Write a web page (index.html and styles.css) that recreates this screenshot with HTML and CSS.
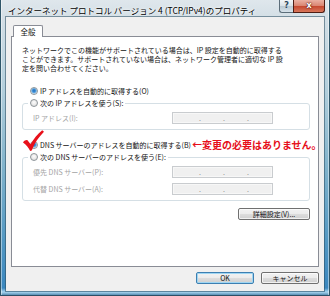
FILE: index.html
```html
<!DOCTYPE html>
<html lang="ja">
<head>
<meta charset="utf-8">
<title>IPv4 のプロパティ</title>
<link rel="stylesheet" href="styles.css">
</head>
<body>
<div class="window">
  <div class="titlebar">
    <span class="title">インターネット プロトコル バージョン 4 (TCP/IPv4)のプロパティ</span>
    <div class="caption">
      <span class="cap help">?</span>
      <span class="cap close">x</span>
    </div>
  </div>
  <div class="client">
    <div class="tabs"><div class="tab">全般</div></div>
    <div class="panel">
      <p class="desc">ネットワークでこの機能がサポートされている場合は、IP 設定を自動的に取得する<br>ことができます。サポートされていない場合は、ネットワーク管理者に適切な IP 設<br>定を問い合わせてください。</p>

      <div class="row opt"><span class="radio on"></span><span>IP アドレスを自動的に取得する(O)</span></div>
      <fieldset class="group">
        <legend class="opt"><span class="radio"></span><span>次の IP アドレスを使う(S):</span></legend>
        <div class="field"><span class="lbl">IP アドレス(I):</span><span class="ip"><i>.</i><i>.</i><i>.</i></span></div>
      </fieldset>

      <div class="row opt dns">
        <span class="radio on"></span><span>DNS サーバーのアドレスを自動的に取得する(B)</span><span class="note">←変更の必要はありません。</span>
        <svg class="check" width="22" height="22" viewBox="0 0 22 22"><path d="M0 12.5 C1.5 10.5 3 9.8 4.5 10.2 L7.6 14.2 C10.8 8.6 14.6 3.8 19.2 0.2 L21 1.8 C15.6 7.2 11.6 13 8.8 20.4 L7.2 21 C5.4 17.4 3.2 14.6 0 12.5 Z" fill="#e8101a"/></svg>
      </div>
      <fieldset class="group">
        <legend class="opt"><span class="radio"></span><span>次の DNS サーバーのアドレスを使う(E):</span></legend>
        <div class="field"><span class="lbl">優先 DNS サーバー(P):</span><span class="ip"><i>.</i><i>.</i><i>.</i></span></div>
        <div class="field"><span class="lbl">代替 DNS サーバー(A):</span><span class="ip"><i>.</i><i>.</i><i>.</i></span></div>
      </fieldset>

      <div class="adv"><button class="btn wide">詳細設定(V)...</button></div>
    </div>
    <div class="actions">
      <button class="btn default">OK</button>
      <button class="btn">キャンセル</button>
    </div>
  </div>
</div>
</body>
</html>
```

FILE: styles.css
```css
* { box-sizing: border-box; }
html, body { margin: 0; padding: 0; }
body {
  width: 330px;
  height: 296px;
  overflow: hidden;
  font-family: "Noto Sans CJK JP", "Noto Sans", sans-serif;
  font-size: 7px;
  color: #111;
}

.window {
  width: 330px;
  height: 296px;
  padding: 0 6px 5px 6px;
  background: linear-gradient(180deg, #dfe7ec 0, #d4dfe6 17px, #b3cfdc 90px, #7fb2cb 170px, #5398c2 240px, #3a87bf 288px, #a8d6f0 292px, #3b75a0 296px);
  box-shadow: inset 1px 0 #2f5669, inset -1px 0 #2f5669, inset 0 -1px #2b4f66, inset 2px 0 rgba(255,255,255,.45), inset -2px 0 rgba(255,255,255,.45);
  display: flex;
  flex-direction: column;
}

.titlebar {
  height: 17px;
  display: flex;
  align-items: flex-start;
  flex: none;
}
.title {
  padding: 2px 0 0 2px;
  font-size: 8.5px;
  line-height: 17px;
  white-space: nowrap;
  color: #000;
  text-shadow: 0 0 4px #fff, 0 0 2px #fff;
}
.caption {
  margin-left: auto;
  display: flex;
  margin-right: -1px;
}
.cap {
  height: 13px;
  display: flex;
  align-items: center;
  justify-content: center;
  font-family: "DejaVu Sans", sans-serif;
  font-weight: bold;
  font-size: 8px;
  line-height: 1;
}
.help {
  width: 14px;
  border: 1px solid #5c6e7a;
  border-top: none;
  border-right: none;
  border-radius: 0 0 0 3px;
  background: linear-gradient(180deg, #f3f6f8 0, #d9e2e8 50%, #b9c8d2 51%, #d7e2ea 100%);
  color: #29465a;
}
.close {
  width: 32px;
  border: 1px solid #4e1d14;
  border-top: none;
  border-radius: 0 0 3px 0;
  background: linear-gradient(180deg, #eab0a2 0, #d98470 50%, #c5472f 51%, #d8765a 100%);
  color: #fff;
  text-shadow: 0 0 1px #4a1208, 0 0 2px #4a1208;
}

.client {
  flex: 1;
  background: #f0f0f0;
  padding: 8px 5px 6px 5px;
  box-shadow: 0 0 0 1px rgba(40, 75, 95, .55);
  display: flex;
  flex-direction: column;
}

.tabs { display: flex; flex: none; }
.tab {
  margin-left: 2px;
  width: 30px;
  height: 12px;
  margin-bottom: -1px;
  position: relative;
  z-index: 1;
  background: #fff;
  border: 1px solid #898c95;
  border-bottom: none;
  border-radius: 2px 2px 0 0;
  font-size: 7.5px;
  line-height: 11px;
  text-align: center;
}

.panel {
  height: 231px;
  flex: none;
  background: #fff;
  border: 1px solid #898c95;
  display: flex;
  flex-direction: column;
}

.desc {
  margin: 9px 0 0 10px;
  line-height: 9px;
  white-space: nowrap;
}

.opt {
  display: flex;
  align-items: center;
  gap: 2px;
  height: 12px;
  white-space: nowrap;
}
.row { padding-left: 18px; margin-top: 12px; }
.row.dns { margin-top: 9px; position: relative; }

.radio {
  width: 8px;
  height: 8px;
  border-radius: 50%;
  border: 1px solid #8e959a;
  background: radial-gradient(circle at 50% 40%, #fdfdfd 0, #e6e6e6 60%, #d2d2d2 100%);
  flex: none;
}
.radio.on {
  background: radial-gradient(circle at 50% 45%, #1e6fbf 0, #3a8ad3 1.4px, #8fc3ea 2.6px, #eef3f7 3.2px, #d6dadd 100%);
}

.group {
  margin: 0 8px 0 10px;
  padding: 3px 0 5px 0;
  border: 1px solid #d5dfe5;
  border-radius: 3px;
  min-width: 0;
}
.group legend {
  margin-left: 5px;
  padding: 0 2px;
}

.field {
  display: flex;
  align-items: center;
  height: 12px;
}
.field + .field { margin-top: 5px; }
.lbl {
  width: 149px;
  padding-left: 10px;
  color: #a3a3a3;
  white-space: nowrap;
}
.ip {
  width: 101px;
  height: 12px;
  border: 1px solid #c9cccf;
  background: #f0f0f0;
  box-shadow: inset 0 0 0 1px #f7f7f7;
  display: flex;
  align-items: center;
  gap: 22px;
  padding-left: 26px;
  color: #8a8a8a;
}
.ip i {
  width: 2px;
  font-style: normal;
  line-height: 10px;
}

.note {
  color: #e60e19;
  font-weight: 700;
  font-size: 10px;
  line-height: 12px;
  margin-left: -1px;
}
.check {
  position: absolute;
  left: 11px;
  top: -9px;
}

.adv {
  display: flex;
  justify-content: flex-end;
  margin: 7px 8px 0 0;
}

.btn {
  font: inherit;
  font-size: 7px;
  color: #111;
  height: 12px;
  width: 58px;
  padding: 0;
  line-height: 10px;
  border: 1px solid #707070;
  border-radius: 2px;
  background: linear-gradient(180deg, #f2f2f2 0, #ebebeb 50%, #dddddd 51%, #cfcfcf 100%);
  box-shadow: inset 0 0 0 1px rgba(255,255,255,.7);
}
.btn.wide { width: 72px; }
.btn.default {
  border-color: #3c7fb1;
  box-shadow: inset 0 0 0 1px #9fd6f3;
}

.actions {
  display: flex;
  justify-content: flex-end;
  gap: 7px;
  margin-top: 5px;
  flex: none;
}
```
